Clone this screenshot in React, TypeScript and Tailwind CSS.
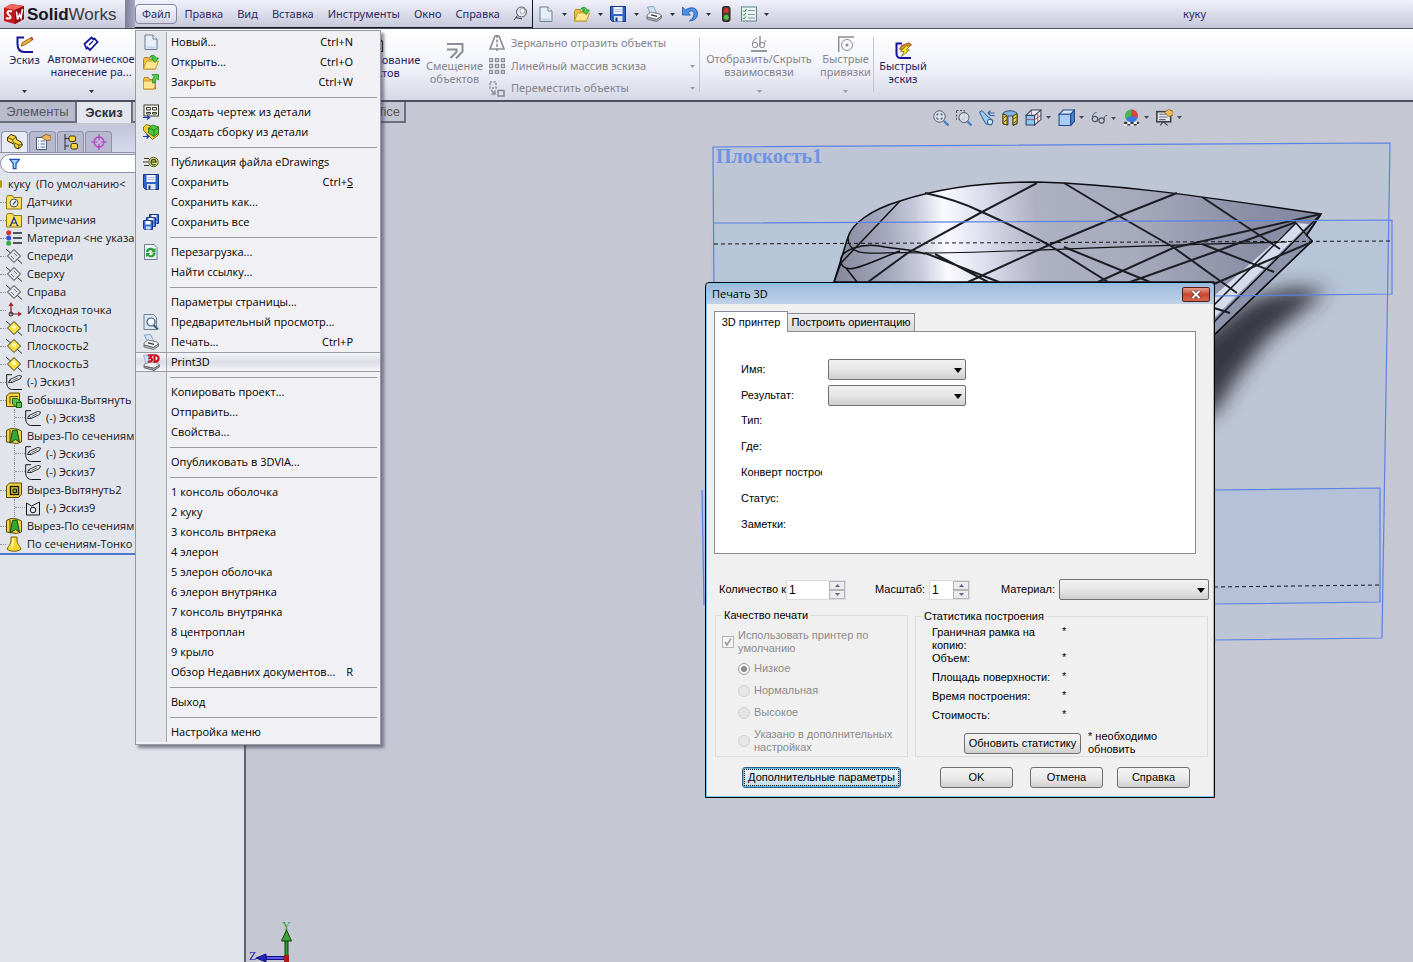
import { useState } from 'react'
import type { ReactNode } from 'react'

/* ---------- icons ---------- */

function Svg({ children, size = 16 }: { children: ReactNode; size?: number }) {
    return (
        <svg width={size} height={size} viewBox="0 0 16 16" fill="none" className="shrink-0" aria-hidden="true">
            {children}
        </svg>
    )
}

const DownArrow = ({ className = 'text-[#30303c]' }: { className?: string }) => (
    <svg width="5" height="3" viewBox="0 0 5 3" className={`shrink-0 ${className}`} aria-hidden="true">
        <path d="M0 0h5L2.500 3z" fill="currentColor" />
    </svg>
)

const NewIcon = () => (
    <Svg>
        <path d="M2 1h8l4 4v10.500H2z" fill="#e8eef6" stroke="#6b7c92" />
        <path d="M10 1v4h4" fill="#fff" stroke="#6b7c92" />
        <path d="M3.500 13.500h9" stroke="#c3d2e4" strokeWidth="2" />
    </Svg>
)

const OpenIcon = () => (
    <Svg>
        <path d="M.5 5.500l1-2h4l1 2h6V15H.5z" fill="#f0c244" stroke="#b0851f" />
        <path d="M.5 15l3-8h12L12.500 15z" fill="#ffe790" stroke="#c49a2c" />
        <path d="M6.500 3.500c1.500-3 5.500-3 6.500.5h2.500l-3.500 4.500L8.500 4h2C10 2.800 8 2.600 6.500 3.500z" fill="#4fd04a" stroke="#158015" strokeWidth=".7" />
    </Svg>
)

const CloseDocIcon = () => (
    <Svg>
        <path d="M.5 5.500l1-2h4l1 2h6V15H.5z" fill="#f0c244" stroke="#b0851f" />
        <path d="M.5 15V7h11.500v6L10 15z" fill="#ffe790" stroke="#c49a2c" />
        <path d="M9 .5h6.500v5.500l-2-1.500c-1 1-1.500 2.500-1.500 4.500H9.500c0-3 .5-5 1.500-6.500z" fill="#4fd04a" stroke="#158015" strokeWidth=".7" />
    </Svg>
)

const SaveIcon = () => (
    <Svg>
        <path d="M.5.5h15v15h-13l-2-2z" fill="#2f63c8" stroke="#16357e" />
        <path d="M3.500 1h9v7h-9z" fill="#f2f6fd" />
        <path d="M4.500 3.500h7M4.500 5.500h7" stroke="#a9bcdf" />
        <path d="M4 10h8.500v5.500H4z" fill="#dfe5f0" />
        <path d="M5.500 11.500h2v4h-2z" fill="#16357e" />
    </Svg>
)

const SaveAllIcon = () => (
    <Svg>
        {[[6, 0], [3, 3], [0, 6]].map(([x, y]) => (
            <g key={x} transform={`translate(${x} ${y})`}>
                <path d="M.5.5h9v9h-8l-1-1z" fill="#3a6fd4" stroke="#17388a" />
                <path d="M2.500 1h5v3.500h-5z" fill="#fff" />
                <path d="M3 6.500h4.500v3H3z" fill="#cfe0f8" />
            </g>
        ))}
    </Svg>
)

const PrintIcon = () => (
    <Svg>
        <path d="M1.500 1l6-.5 3 6-6 2z" fill="#cfe4fa" stroke="#7391b5" strokeWidth=".8" />
        <path d="M1 9l4-3 9 2 1.500 2-5 3.500L1 11z" fill="#f2f2f2" stroke="#63636a" strokeWidth=".8" />
        <path d="M1 11v2l9.500 2.500 5-3.500v-2l-5 3.500z" fill="#bfbfc5" stroke="#55555c" strokeWidth=".8" />
        <path d="M5 8.800l6 1.500" stroke="#35353c" strokeWidth="1.200" />
    </Svg>
)

const Print3DIcon = () => (
    <Svg size={17}>
        <path d="M1 10l4-3 9 1.500 1.500 2-5 3L1 11.500z" fill="#eeeef0" stroke="#63636a" strokeWidth=".8" />
        <path d="M1 11.500v1.500l9.500 2.500 5-3.500v-1.500l-5 3z" fill="#a9a9b0" stroke="#55555c" strokeWidth=".8" />
        <path d="M.5 1h4l2 7-3.500 1z" fill="#cfe4fa" stroke="#7391b5" strokeWidth=".6" />
        <path d="M4.500 1.200h4L6.500 3.700c3.200 0 2.500 4.300-2 3.300M10.800 1.200v6h.7c4.200 0 4.200-6 0-6z" stroke="#cc1420" strokeWidth="2" />
    </Svg>
)

const UndoIcon = () => (
    <Svg>
        <path d="M.5 1v8h8L6 6.800C8 4.500 12 4 12 8c0 3-2 5-4.500 7C13 14.500 16 11.500 15.500 7 15 1 8 .5 3.500 4z" fill="#4a93e6" stroke="#1c4fa3" strokeWidth=".8" />
    </Svg>
)

const LightIcon = () => (
    <Svg>
        <rect x="4.500" y=".5" width="7.500" height="15" rx="2" fill="#4a3c36" stroke="#2a201c" />
        <circle cx="8.250" cy="4.500" r="2.500" fill="#e0302a" />
        <circle cx="8.250" cy="11.200" r="2.500" fill="#46c846" />
    </Svg>
)

const OptionsIcon = () => (
    <Svg>
        <rect x=".5" y="1" width="15" height="14" fill="#eaf3f4" stroke="#5f8589" />
        <path d="M7 4.500h7M7 8.500h7M7 12h7" stroke="#7f9ca0" />
        <path d="M2 4.500l1.500 1.500 2-3M2 8.500l1 1L5 7M2 12l1 1 2-2.500" stroke="#2c8a3c" />
    </Svg>
)

const PinIcon = () => (
    <Svg>
        <circle cx="9.500" cy="6" r="5" fill="#e8e8f0" stroke="#55555f" />
        <circle cx="10.500" cy="5" r="2.500" fill="#fff" stroke="#7c7c88" strokeWidth=".7" />
        <path d="M5.500 9.500L2 14M4 11.500l6 1.500" stroke="#3c3c46" />
    </Svg>
)

const DrawingIcon = () => (
    <Svg>
        <rect x="1" y="1" width="14.500" height="11" fill="#f6f6ec" stroke="#3a3a32" />
        <path d="M3.500 3.500h4v2.500h-4zM9.500 3.500h4v2.500h-4zM3.500 8.500h4v1.500h-4zM9.500 8.500h4v1.500h-4z" stroke="#3a3a32" />
        <path d="M0 13.500h6M4 11.500l2.500 2L4 15.500" stroke="#1b3fb0" strokeWidth="1.200" />
    </Svg>
)

const AssemblyIcon = () => (
    <Svg>
        <path d="M.5 3l3-2.500 12 4V11l-6 4.500-9-9z" fill="#f4cf33" stroke="#6b5510" strokeWidth=".8" />
        <path d="M5.500 4l4-3 6 2v6L11 12.500 5.500 9z" fill="#4fc63e" stroke="#1e6b14" strokeWidth=".8" />
        <path d="M5.500 4l5.500 2.200L15.500 3M11 6.200v6.300" stroke="#1e6b14" strokeWidth=".8" />
        <path d="M0 12.500h5M3.500 10.500l2.500 2-2.500 2" stroke="#1b3fb0" strokeWidth="1.200" />
    </Svg>
)

const EDrawingsIcon = () => (
    <Svg>
        <circle cx="10.500" cy="8" r="4.700" fill="#dbe08a" stroke="#5b6020" />
        <path d="M8 8.200h5c0-3.600-4.700-3.600-5 0 0 3 3 3.300 4.800 2" stroke="#4a4f18" strokeWidth="1.300" />
        <path d="M1 4.500h5M0 8h5M1 11.500h5" stroke="#33331e" />
    </Svg>
)

const ReloadIcon = () => (
    <Svg>
        <path d="M1.500.5H11l3 3v12H1.500z" fill="#eef4fa" stroke="#6b7c92" />
        <path d="M3 8c0-4.500 5.500-5.500 8-3l1.500-1v4.500H8L9.500 7C8.500 5.500 5.500 6 5.500 8z" fill="#26a33a" />
        <path d="M12.500 9c0 4.500-5.500 5.500-8 3L3 13V9h4.500L6 10.500c1 1.500 4 1 4-1.500z" fill="#26a33a" />
    </Svg>
)

const PreviewIcon = () => (
    <Svg>
        <path d="M1 .5h9.500l3 3v12H1z" fill="#dbe7f5" stroke="#6b7c92" />
        <circle cx="8" cy="8" r="4" fill="#f4f9ff" stroke="#42597a" strokeWidth="1.200" />
        <path d="M10.500 11l4.500 4.500" stroke="#42597a" strokeWidth="2" />
    </Svg>
)

const PencilEllipse = () => (
    <Svg>
        <path d="M6 .7H.7V8c0 5 2 7.500 6 7.500H16" stroke="#15151a" />
        <path d="M2.500 8.500L4 5.500 12.500 1.500 15.500 2 14.500 4.500 6 8.500z" fill="#fff" stroke="#15151a" strokeWidth=".9" />
        <path d="M4 5.500l2 3M6.500 6.500l6-3" stroke="#15151a" strokeWidth=".7" />
    </Svg>
)

const FolderIcon = ({ kind }: { kind: 'sensor' | 'note' }) => (
    <Svg>
        <path d="M.5 3.500l1-2h5l1 2h8v11.500H.5z" fill="#ffe05c" stroke="#8d7415" />
        {kind === 'sensor' ? (
            <>
                <circle cx="8" cy="9" r="4" fill="#eef3fa" stroke="#42526e" />
                <path d="M7 10.500L10 7" stroke="#42526e" strokeWidth="1.200" />
            </>
        ) : (
            <path d="M4.500 13.500L8 5.500l3.500 8M6 11h4M3.500 13.500h2M10.500 13.500h2" stroke="#1a2f9c" strokeWidth="1.200" />
        )}
    </Svg>
)

const MaterialIcon = () => (
    <Svg>
        <path d="M7 3h9M7 8h9M7 13h9" stroke="#22222a" strokeWidth="1.400" />
        <circle cx="2.700" cy="2.700" r="2.500" fill="#e0322c" />
        <circle cx="2.700" cy="8" r="2.500" fill="#2f4fe0" />
        <circle cx="2.700" cy="13.300" r="2.500" fill="#2fae3c" />
    </Svg>
)

const PlaneIcon = ({ filled }: { filled?: boolean }) => (
    <Svg>
        <path d="M8 1.500L14.500 8 8 14.500 1.500 8z" fill={filled ? '#ffe03a' : 'none'} stroke="#33332c" />
        {filled ? (
            <path d="M6.500 5.500L9.500 8.500" stroke="#fffbd0" strokeWidth="3" />
        ) : (
            <path d="M5 8l3 3M8 5l3 3" stroke="#4b4b44" strokeWidth=".7" />
        )}
        <path d="M0 1l4.500 4M11.500 11.500L16 15.500" stroke="#33332c" />
    </Svg>
)

const OriginIcon = () => (
    <Svg>
        <path d="M5 3v9h8" stroke="#8c1c1c" strokeWidth="1.200" />
        <path d="M5 0L7.500 4h-5zM16 12l-4 2.500v-5z" fill="#b32020" />
        <circle cx="5" cy="12" r="2" stroke="#22222a" />
    </Svg>
)

const BossIcon = () => (
    <Svg>
        <path d="M.5 4l3-3h10v10l-3 3.500H.5z" fill="#f5d53d" stroke="#59480c" />
        <path d="M4 4.500h8M4 4.500v7" stroke="#59480c" />
        <path d="M6.500 6.500H11l4.500 4v5h-5l-4-3.500z" fill="#55c24a" stroke="#1b5e16" />
        <path d="M10.500 15.500v-5h5" stroke="#1b5e16" />
    </Svg>
)

const LoftCutIcon = () => (
    <Svg>
        <path d="M.5 2.500L5 .5l6 .5 4.500 2V14l-5 1.500L.5 14z" fill="#f5d53d" stroke="#59480c" />
        <path d="M4 15L6.500 2.500 11 2l2.500 12-4-2.500z" fill="#35a63a" stroke="#12480f" />
        <path d="M4 2v12" stroke="#59480c" />
    </Svg>
)

const ExtrudeCutIcon = () => (
    <Svg>
        <path d="M.5 4l3-3h12v11l-3 3.500H.5z" fill="#f5d53d" stroke="#59480c" />
        <rect x="4.500" y="4.500" width="8" height="8" fill="#e9c52c" stroke="#201c08" strokeWidth="1.400" />
        <path d="M7 7h3.500v3.500H7z" fill="#55c24a" stroke="#201c08" />
    </Svg>
)

const SketchClosedIcon = () => (
    <Svg>
        <path d="M1.500 3l5 3 8-4v13h-13z" stroke="#15151a" />
        <circle cx="8" cy="10" r="2.800" stroke="#15151a" />
    </Svg>
)

const LoftIcon = () => (
    <Svg>
        <path d="M5 1h6v3c0 4 2 5 4 9-3 3-11 3-14 0 2-4 4-5 4-9z" fill="#f7d634" stroke="#77600f" />
        <path d="M7 2v4c0 3-1 4-2 6" stroke="#fff6bc" strokeWidth="1.500" />
    </Svg>
)

const PartIcon = () => (
    <Svg>
        <path d="M.5 3.500L4 .5l5 2 .5 3L14 8l1.500 3-4 4L8 13.500l-.5-3-7-3.500z" fill="#f5d53d" stroke="#3c3108" />
        <path d="M.5 3.500l5 2 .7 3L12 11l-.5 4M6 5.500L9 3M12 11l3.500-.5" stroke="#3c3108" strokeWidth=".8" />
    </Svg>
)

const PropertiesIcon = () => (
    <Svg>
        <path d="M1.500 3.500h10v12h-10z" fill="#fff" stroke="#3f5573" />
        <path d="M3 7h1M3 10h1M3 13h1M5.500 7h4.500M5.500 10h4.500M5.500 13h4.500" stroke="#3f66b0" />
        <path d="M6 3l5-2.500L16 2v4l-5 .5z" fill="#e9b65b" stroke="#7c5615" strokeWidth=".8" />
    </Svg>
)

const ConfigIcon = () => (
    <Svg>
        <path d="M2 0v16M2 4.500h4M2 12h4" stroke="#2b2b35" />
        <rect x="6" y="2" width="6.500" height="5.500" rx="1.500" fill="#f5d53d" stroke="#3c3108" />
        <rect x="8" y="9.500" width="6.500" height="5.500" rx="1.500" fill="#f5d53d" stroke="#3c3108" />
    </Svg>
)

const DimXIcon = () => (
    <Svg>
        <circle cx="8" cy="8" r="5" stroke="#b63fce" strokeWidth="1.300" />
        <path d="M8 0v16M0 8h16" stroke="#b63fce" strokeWidth="1.200" />
        <circle cx="8" cy="8" r="1.800" fill="#e9a8f4" />
    </Svg>
)

const FilterIcon = () => (
    <svg width="12" height="12" viewBox="0 0 12 12" aria-hidden="true">
        <path d="M.8 1h10.400L7.500 5.500V11h-3V5.500z" fill="#a9d2ff" stroke="#1b4fb8" strokeWidth="1.300" />
    </svg>
)

const SketchIcon = () => (
    <svg width="18" height="17" viewBox="0 0 18 17" fill="none" aria-hidden="true">
        <path d="M8 1.500H1.500V8c0 6 3 8 7 8H17" stroke="#14149c" strokeWidth="2" />
        <path d="M5 10l1.500-3.500 8-4.500 2 2-8 5z" fill="#f7b733" stroke="#7b3e0c" strokeWidth=".8" />
        <path d="M14 1.500l2.500 3 1-1.500L16 1z" fill="#c23a2c" />
    </svg>
)

const DimensionIcon = () => (
    <svg width="16" height="16" viewBox="0 0 16 16" fill="none" aria-hidden="true">
        <path d="M1.500 8L8.500 1.500l2 2 1-1 3 3.500L7 14 4.500 11.500l-1 1z" fill="#fff" stroke="#14149c" strokeWidth="1.800" />
        <path d="M6 9l4-4" stroke="#14149c" strokeWidth="1.200" />
    </svg>
)

const ConvertIcon = () => (
    <svg width="18" height="17" viewBox="0 0 18 17" fill="none" aria-hidden="true">
        <path d="M5.500 1.500h7l4 4v10h-11z" fill="#fff" stroke="#15151a" strokeWidth="1.200" />
        <path d="M12.500 1.500v4h4" stroke="#15151a" />
    </svg>
)

const OffsetIcon = () => (
    <svg width="18" height="17" viewBox="0 0 18 17" fill="none" stroke="#8d8d95" strokeWidth="2" aria-hidden="true">
        <path d="M1 2h15.500v7.500L10 16.500M1 7.500h9.500V10l-6 6" />
    </svg>
)

const MirrorIcon = () => (
    <Svg>
        <path d="M6 1L1 14h14L10 1z" stroke="#8d8d95" strokeWidth="1.600" />
        <path d="M8 0v16" stroke="#8d8d95" strokeWidth="1.600" strokeDasharray="3 1.500" />
    </Svg>
)

const PatternIcon = () => (
    <Svg>
        {[0, 6, 12].map((y) =>
            [0, 6, 12].map((x) => (
                <rect key={`${x}-${y}`} x={x + 0.5} y={y + 0.5} width="3" height="3" stroke="#8d8d95" strokeWidth="1.400" />
            )),
        )}
    </Svg>
)

const MoveIcon = () => (
    <Svg>
        <rect x="1" y="1" width="6" height="6" stroke="#8d8d95" strokeWidth="1.500" strokeDasharray="2 1.500" />
        <rect x="9" y="9.500" width="6" height="5.500" stroke="#8d8d95" strokeWidth="1.600" />
        <path d="M2 9l4 4M6 9.500V13H2.500" stroke="#8d8d95" strokeWidth="1.500" />
    </Svg>
)

const RelationsIcon = () => (
    <Svg>
        <path d="M0 15h16" stroke="#8d8d95" strokeWidth="1.800" />
        <path d="M9 0v10" stroke="#8d8d95" strokeWidth="1.400" />
        <circle cx="4" cy="9" r="2.700" stroke="#8d8d95" />
        <circle cx="11" cy="9" r="2.700" stroke="#8d8d95" />
        <path d="M1.500 8c0-3 2-5 4.500-6M13.500 8c0-3 1-4 2-3" stroke="#8d8d95" />
    </Svg>
)

const SnapsIcon = () => (
    <Svg>
        <path d="M.7 16V1H16" stroke="#8d8d95" strokeWidth="1.500" />
        <circle cx="9" cy="9" r="5.500" stroke="#8d8d95" />
        <circle cx="9" cy="9" r="1.500" fill="#8d8d95" />
    </Svg>
)

const RapidSketchIcon = () => (
    <svg width="17" height="17" viewBox="0 0 17 17" fill="none" aria-hidden="true">
        <path d="M7 1.500H1.500V12c0 2.500 2 4 4 4H16" stroke="#14149c" strokeWidth="2" />
        <path d="M4.500 7l2-3.500L14 .8l2.500 2L8 8z" fill="#e9893a" stroke="#7b3e0c" strokeWidth=".8" />
        <path d="M11 4L5.500 9.500H9l-2.500 5 8-6.500H11L15 4z" fill="#ffe92e" stroke="#6b5a00" strokeWidth=".7" />
    </svg>
)

/* heads-up view toolbar */

const ZoomFitIcon = () => (
    <Svg>
        <circle cx="6.500" cy="6.500" r="5.700" fill="#d9e2ee" stroke="#565c6a" />
        <path d="M4 5.500V4h1.500M7.500 4H9v1.500M9 7.500V9H7.500M5.500 9H4V7.500" stroke="#33384a" />
        <path d="M11 11l4.500 4.500" stroke="#4a7fc4" strokeWidth="2.400" />
    </Svg>
)

const ZoomAreaIcon = () => (
    <Svg>
        <path d="M.5.5h8v9h-8z" stroke="#4c5262" strokeDasharray="2 1.500" />
        <circle cx="8" cy="7.500" r="5" fill="#d9e2ee" fillOpacity=".8" stroke="#565c6a" />
        <path d="M11.500 11.500l4 4" stroke="#4a7fc4" strokeWidth="2.400" />
    </Svg>
)

const PrevViewIcon = () => (
    <Svg>
        <path d="M.5 2l2.500-1.500L8 6l6 4.500-1.500 4.500-5.500-1L4 9z" fill="#9cc9ee" stroke="#2c5c94" />
        <circle cx="11" cy="12" r="2.700" fill="#cfe7fb" stroke="#2c5c94" />
        <path d="M15.500 3H9M11.500.5L9 3l2.500 2.500M15.500 5.500h-4" stroke="#3c64ad" strokeWidth="1.100" />
    </Svg>
)

const SectionIcon = () => (
    <Svg>
        <path d="M1 3c4-3 10-3 14 0v11l-4 1.500V6H6v9L1 14z" fill="#7fb4e8" stroke="#2c5280" />
        <path d="M1 4l4 1.500V15l-4-1.500zM11 5.500L15 4v9.500L11 15z" fill="#f5d53d" stroke="#4b3f0c" />
        <path d="M1.500 8l3-2M1.500 12l3-2M11.500 9l3-2M11.500 13l3-2" stroke="#4b3f0c" />
    </Svg>
)

const OrientIcon = () => (
    <Svg size={17}>
        <path d="M1 6h8v9H1z" fill="#8cc6f2" stroke="#29466b" />
        <path d="M1 6l5-5h9L9 6zM15 1v9l-6 5V6" fill="#e9eef7" stroke="#3a4459" />
        <path d="M6 1v5M1 10h8M12 4v8M9 10l6-4" stroke="#a03c4c" strokeWidth=".8" />
    </Svg>
)

const DisplayIcon = () => (
    <Svg size={17}>
        <path d="M1 5l4-4h10.500L12 5z" fill="#d5e8fb" stroke="#28498c" />
        <path d="M1 5h11v10.500H1z" fill="#a5cdf5" stroke="#28498c" />
        <path d="M12 5l3.500-4v10.500L12 15.500z" fill="#4b82cf" stroke="#28498c" />
    </Svg>
)

const HideShowIcon = () => (
    <Svg>
        <circle cx="4" cy="9" r="2.700" stroke="#4f5665" strokeWidth="1.200" />
        <circle cx="10.500" cy="10.500" r="2.700" stroke="#4f5665" strokeWidth="1.200" />
        <path d="M1.300 8.500C1.500 5 3 2.500 5.500 2.500M6.700 9.500h1.300M13 10c0-3 1-4.500 3-4.500" stroke="#4f5665" />
    </Svg>
)

const AppearanceIcon = () => (
    <Svg size={17}>
        <path d="M1 12h14v3.500H1z" fill="#fff" />
        <path d="M1 12h3v2H1zM7 12h3v2H7zM13 12h2v2h-2zM4 14h3v1.500H4zM10 14h3v1.500h-3z" fill="#33333c" />
        <circle cx="8" cy="6.500" r="6" fill="#3f78dc" />
        <path d="M8 .5a6 6 0 0 0-5.500 8.500L8 6.500z" fill="#48b84b" />
        <path d="M8 .5a6 6 0 0 1 5.800 7.500L8 6.500z" fill="#dd4438" />
    </Svg>
)

const SceneIcon = () => (
    <Svg size={17}>
        <rect x=".8" y="2.500" width="13" height="9.500" fill="#e8e8ea" stroke="#3b3f4a" strokeWidth="1.500" />
        <path d="M3 5h8M3 7.500h8M3 10h6" stroke="#62677a" />
        <path d="M4 15.500L7 12l4 3.500" stroke="#3b3f4a" />
        <path d="M8 3l4-2.500L16 2v4l-4 1z" fill="#f0bd5c" stroke="#7c5615" strokeWidth=".7" />
    </Svg>
)

const LogoCube = () => (
    <svg width="22" height="22" viewBox="0 0 22 22" aria-hidden="true">
        <path d="M1 5L8 1l13 2v13l-9 5-11-3z" fill="#c3171c" />
        <path d="M1 5L8 1l13 2-9 4z" fill="#f0655c" />
        <path d="M12 7l9-4v13l-9 5z" fill="#8d0a10" />
        <path d="M9 8.500c-4-1.500-6 1-3 3.500 3 2 1.500 4.500-3 3" fill="none" stroke="#fff" strokeWidth="2" />
        <path d="M13.500 8.500l1 8 2-5 1.500 3.500 1.500-9" fill="none" stroke="#fff" strokeWidth="1.600" />
    </svg>
)

/* ---------- data ---------- */

const menuBar = ['Файл', 'Правка', 'Вид', 'Вставка', 'Инструменты', 'Окно', 'Справка']

type MenuEntry = { label: string; icon?: ReactNode; keys?: ReactNode; active?: boolean }

const fileMenu: MenuEntry[][] = [
    [
        { label: 'Новый...', icon: <NewIcon />, keys: 'Ctrl+N' },
        { label: 'Открыть...', icon: <OpenIcon />, keys: 'Ctrl+O' },
        { label: 'Закрыть', icon: <CloseDocIcon />, keys: 'Ctrl+W' },
    ],
    [
        { label: 'Создать чертеж из детали', icon: <DrawingIcon /> },
        { label: 'Создать сборку из детали', icon: <AssemblyIcon /> },
    ],
    [
        { label: 'Публикация файла eDrawings', icon: <EDrawingsIcon /> },
        { label: 'Сохранить', icon: <SaveIcon />, keys: <>Ctrl+<u>S</u></> },
        { label: 'Сохранить как...' },
        { label: 'Сохранить все', icon: <SaveAllIcon /> },
    ],
    [{ label: 'Перезагрузка...', icon: <ReloadIcon /> }, { label: 'Найти ссылку...' }],
    [
        { label: 'Параметры страницы...' },
        { label: 'Предварительный просмотр...', icon: <PreviewIcon /> },
        { label: 'Печать...', icon: <PrintIcon />, keys: 'Ctrl+P' },
        { label: 'Print3D', icon: <Print3DIcon />, active: true },
    ],
    [{ label: 'Копировать проект...' }, { label: 'Отправить...' }, { label: 'Свойства...' }],
    [{ label: 'Опубликовать в 3DVIA...' }],
    [
        { label: '1 консоль оболочка' },
        { label: '2 куку' },
        { label: '3 консоль внтряека' },
        { label: '4 элерон' },
        { label: '5 элерон оболочка' },
        { label: '6 элерон внутрянка' },
        { label: '7 консоль внутрянка' },
        { label: '8 центроплан' },
        { label: '9 крыло' },
        { label: 'Обзор Недавних документов...', keys: 'R' },
    ],
    [{ label: 'Выход' }],
    [{ label: 'Настройка меню' }],
]

const quickTools = [
    { name: 'Новый', icon: <NewIcon /> },
    { name: 'Открыть', icon: <OpenIcon /> },
    { name: 'Сохранить', icon: <SaveIcon /> },
    { name: 'Печать', icon: <PrintIcon /> },
    { name: 'Отменить', icon: <UndoIcon /> },
]

const viewTools = [
    { name: 'Изменить в размер экрана', icon: <ZoomFitIcon /> },
    { name: 'Увеличить область', icon: <ZoomAreaIcon /> },
    { name: 'Предыдущий вид', icon: <PrevViewIcon /> },
    { name: 'Разрез', icon: <SectionIcon /> },
    { name: 'Ориентация видов', icon: <OrientIcon />, drop: true },
    { name: 'Стиль отображения', icon: <DisplayIcon />, drop: true },
    { name: 'Скрыть или показать', icon: <HideShowIcon />, drop: true },
    { name: 'Внешний вид', icon: <AppearanceIcon />, drop: true },
    { name: 'Сцена', icon: <SceneIcon />, drop: true },
]

const tree: { label: string; icon: ReactNode; child?: boolean }[] = [
    { label: 'Датчики', icon: <FolderIcon kind="sensor" /> },
    { label: 'Примечания', icon: <FolderIcon kind="note" /> },
    { label: 'Материал <не указа', icon: <MaterialIcon /> },
    { label: 'Спереди', icon: <PlaneIcon /> },
    { label: 'Сверху', icon: <PlaneIcon /> },
    { label: 'Справа', icon: <PlaneIcon /> },
    { label: 'Исходная точка', icon: <OriginIcon /> },
    { label: 'Плоскость1', icon: <PlaneIcon filled /> },
    { label: 'Плоскость2', icon: <PlaneIcon filled /> },
    { label: 'Плоскость3', icon: <PlaneIcon filled /> },
    { label: '(-) Эскиз1', icon: <PencilEllipse /> },
    { label: 'Бобышка-Вытянуть', icon: <BossIcon /> },
    { label: '(-) Эскиз8', icon: <PencilEllipse />, child: true },
    { label: 'Вырез-По сечениям', icon: <LoftCutIcon /> },
    { label: '(-) Эскиз6', icon: <PencilEllipse />, child: true },
    { label: '(-) Эскиз7', icon: <PencilEllipse />, child: true },
    { label: 'Вырез-Вытянуть2', icon: <ExtrudeCutIcon /> },
    { label: '(-) Эскиз9', icon: <SketchClosedIcon />, child: true },
    { label: 'Вырез-По сечениям', icon: <LoftCutIcon /> },
    { label: 'По сечениям-Тонко', icon: <LoftIcon /> },
]

const panelTabs = [
    { name: 'Дерево конструирования', icon: <PartIcon /> },
    { name: 'Менеджер свойств', icon: <PropertiesIcon /> },
    { name: 'Менеджер конфигураций', icon: <ConfigIcon /> },
    { name: 'Менеджер размеров', icon: <DimXIcon /> },
]

/* ---------- top bars ---------- */

function FileMenu() {
    return (
        <div
            role="menu"
            className="absolute top-[30px] left-[135px] z-30 w-[246px] border border-[#979aa2] bg-[#f1f1f5] pt-px pb-[2px] font-['Open_Sans',sans-serif] text-[11px] text-black shadow-[3px_3px_3px_rgba(60,60,80,0.6)]"
        >
            {fileMenu.map((group, i) => (
                <div key={i}>
                    {i > 0 && (
                        <div className="flex h-[10px] items-center">
                            <div className="h-full w-[31px] border-r border-[#a5a8ae] bg-[#e3e6ea]" />
                            <hr className="mr-[3px] ml-[3px] flex-1 border-[#9b9ba3]" />
                        </div>
                    )}
                    {group.map((item) => (
                        <button
                            key={item.label}
                            role="menuitem"
                            className={`flex h-5 w-full items-center text-left ${
                                item.active
                                    ? 'border-y border-[#9a9da6] bg-linear-to-b from-[#f4f4f8] via-[#dcdde6] to-[#f4f4f8]'
                                    : ''
                            }`}
                        >
                            <span
                                className={`flex h-full w-[31px] shrink-0 items-center justify-center border-r border-[#a5a8ae] ${
                                    item.active ? '' : 'bg-[#e3e6ea]'
                                }`}
                            >
                                {item.icon}
                            </span>
                            <span className="ml-1 flex-1 whitespace-nowrap">{item.label}</span>
                            <span className="mr-[27px]">{item.keys}</span>
                        </button>
                    ))}
                </div>
            ))}
        </div>
    )
}

function TitleBar() {
    return (
        <header className="relative z-20 flex h-7 shrink-0 items-stretch bg-linear-to-b from-[#f0f1fa] to-[#c6c8da] text-[#2b2b66]">
            <div className="flex w-[125px] items-center gap-[2px] pl-[3px]">
                <LogoCube />
                <span className="font-['Liberation_Sans',sans-serif] text-[17px] leading-none text-[#3a3a42]">
                    <b className="text-[#16161c]">Solid</b>Works
                </span>
            </div>
            <div className="w-[10px] bg-linear-to-r from-[#7c7e98] to-[#a9abc4]" />
            <nav className="flex items-center border-r border-b border-[#16161c]">
                {menuBar.map((name, i) => (
                    <button
                        key={name}
                        className={`h-5 rounded-[4px] border px-[6px] leading-none ${
                            i === 0 ? 'border-[#85879c] bg-linear-to-b from-[#f6f6fc] to-[#d4d6e6]' : 'border-transparent'
                        }`}
                    >
                        {name}
                    </button>
                ))}
                <button aria-label="Закрепить" className="mr-[4px] ml-[5px]">
                    <PinIcon />
                </button>
            </nav>
            <div className="flex items-center pl-[5px]">
                {quickTools.map((tool) => (
                    <button key={tool.name} aria-label={tool.name} className="flex w-9 items-center gap-2">
                        {tool.icon}
                        <DownArrow />
                    </button>
                ))}
                <button aria-label="Перестроить" className="w-[23px]">
                    <LightIcon />
                </button>
                <button aria-label="Параметры" className="flex items-center gap-[7px]">
                    <OptionsIcon />
                    <DownArrow />
                </button>
            </div>
            <h1 className="mr-[207px] ml-auto self-center">куку</h1>
            <FileMenu />
        </header>
    )
}

type BigButtonProps = { icon: ReactNode; lines: string[]; width: string; on?: boolean; drop?: boolean; low?: boolean }

function BigButton({ icon, lines, width, on, drop, low }: BigButtonProps) {
    return (
        <button
            className={`flex h-full flex-col items-center leading-[13px] whitespace-nowrap ${width} ${
                low ? 'pt-[13px]' : 'pt-[7px]'
            } ${on ? 'text-[#23235f]' : 'text-[#85858d]'}`}
        >
            {icon}
            {lines.map((line) => (
                <span key={line}>{line}</span>
            ))}
            {drop && (
                <span className="mt-auto pb-[7px]">
                    <DownArrow className={on ? 'text-[#30303c]' : 'text-[#9a9aa4]'} />
                </span>
            )}
        </button>
    )
}

function Ribbon() {
    const small = [
        { name: 'Зеркально отразить объекты', icon: <MirrorIcon /> },
        { name: 'Линейный массив эскиза', icon: <PatternIcon />, drop: true },
        { name: 'Переместить объекты', icon: <MoveIcon />, drop: true },
    ]
    return (
        <div className="flex h-[74px] shrink-0 items-stretch border-t border-b-2 border-[#4d4d5e] bg-linear-to-b from-white via-[#f3f4fa] to-[#d6d8e6]">
            <BigButton icon={<SketchIcon />} lines={['Эскиз']} width="w-[49px]" on drop />
            <BigButton icon={<DimensionIcon />} lines={['Автоматическое', 'нанесение ра...']} width="w-[84px]" on drop />
            <div className="w-[197px]" />
            <BigButton icon={<ConvertIcon />} lines={['Преобразование', 'объектов']} width="w-[90px]" on />
            <BigButton icon={<OffsetIcon />} lines={['Смещение', 'объектов']} width="w-[69px]" low />
            <div className="flex w-[210px] flex-col pt-[3px] text-[#85858d]">
                {small.map((item) => (
                    <button key={item.name} className="flex h-[23px] items-center gap-[6px] pr-1">
                        {item.icon}
                        <span className="flex-1 text-left whitespace-nowrap">{item.name}</span>
                        {item.drop && <DownArrow className="text-[#9a9aa4]" />}
                    </button>
                ))}
            </div>
            <div className="my-2 w-px bg-[#c3c4d0]" />
            <BigButton icon={<RelationsIcon />} lines={['Отобразить/Скрыть', 'взаимосвязи']} width="w-[118px]" drop />
            <BigButton icon={<SnapsIcon />} lines={['Быстрые', 'привязки']} width="w-[55px]" drop />
            <div className="my-2 w-px bg-[#c3c4d0]" />
            <BigButton icon={<RapidSketchIcon />} lines={['Быстрый', 'эскиз']} width="w-[58px]" on low />
        </div>
    )
}

function TabStrip() {
    return (
        <div className="flex h-6 shrink-0">
            <div className="flex h-[21px] border-b-2 border-[#6b6d80] font-['Liberation_Sans',sans-serif] text-[13px] text-[#55555f]">
                <button className="w-[77px] border-r-2 border-[#6b6d80] bg-[#b9bbca]">Элементы</button>
                <button className="-mb-[2px] w-[54px] bg-[#e4e6ee] font-bold text-[#2f2f38]">Эскиз</button>
                <div className="w-[220px] border-l-2 border-[#6b6d80]" />
                <button className="w-[55px] border-r-2 border-[#6b6d80] bg-[#c3c5d3] pr-1 text-right">Office</button>
            </div>
            <div className="mr-[231px] ml-auto flex items-end gap-[7px]">
                {viewTools.map((tool) => (
                    <button key={tool.name} aria-label={tool.name} className="flex items-center gap-[4px] pt-2">
                        {tool.icon}
                        {tool.drop && <DownArrow className="text-[#4a4a56]" />}
                    </button>
                ))}
            </div>
        </div>
    )
}

/* ---------- feature tree ---------- */

function FeaturePanel() {
    return (
        <aside className="w-[246px] shrink-0 border-r-2 border-[#5f6673] bg-[#e1e4ea]">
            <div className="flex h-[27px] items-end gap-px border-b border-[#8d90a6] bg-linear-to-b from-[#c3c5dc] to-[#d6d8ec] pl-px">
                {panelTabs.map((tab, i) => (
                    <button
                        key={tab.name}
                        aria-label={tab.name}
                        className={`flex h-[21px] w-[27px] items-center justify-center rounded-t-[4px] border border-b-0 border-[#8d90a6] ${
                            i === 0 ? 'bg-[#e8eaf4]' : 'bg-[#b7b9cf]'
                        }`}
                    >
                        {tab.icon}
                    </button>
                ))}
            </div>
            <div className="mt-px flex h-[19px] items-center rounded-l-full border border-[#8d90a6] bg-white pl-2">
                <FilterIcon />
                <input aria-label="Фильтр" className="ml-1 h-4 w-full bg-transparent outline-none" />
            </div>
            <ul className="border-b-2 border-[#4a78c8] pt-[2px] font-['Open_Sans',sans-serif] text-[11px] whitespace-nowrap text-[#16161c]">
                <li className="flex h-[18px] items-center gap-[6px]">
                    <span className="h-2 w-[2px] rounded-r-full bg-[#b89412]" />
                    <span className="whitespace-pre">куку  (По умолчанию&lt;</span>
                </li>
                {tree.map((node, i) => (
                    <li key={i} className="flex h-[18px] items-center">
                        {node.child ? (
                            <span className="ml-[14px] flex h-full w-[11px] flex-col border-l border-dotted border-[#8f8f98]">
                                <span className="h-[9px] border-b border-dotted border-[#8f8f98]" />
                            </span>
                        ) : (
                            <span className="w-[6px] border-b border-dotted border-[#8f8f98]" />
                        )}
                        {node.icon}
                        <span className="ml-[5px]">{node.label}</span>
                    </li>
                ))}
            </ul>
        </aside>
    )
}

/* ---------- 3D scene ---------- */

function Scene() {
    return (
        <svg width="1167" height="836" viewBox="246 126 1167 836" fill="none" className="absolute top-0 left-0">
            <defs>
                <linearGradient id="skin" gradientUnits="userSpaceOnUse" x1="835" y1="260" x2="1320" y2="225">
                    <stop offset="0" stopColor="#85889c" />
                    <stop offset=".11" stopColor="#a6a9bd" />
                    <stop offset=".17" stopColor="#c6c8da" />
                    <stop offset=".23" stopColor="#fafaff" />
                    <stop offset=".31" stopColor="#dcdeed" />
                    <stop offset=".42" stopColor="#aeb0c3" />
                    <stop offset=".62" stopColor="#a7a9bc" />
                    <stop offset=".85" stopColor="#8c8fa6" />
                    <stop offset="1" stopColor="#8286a0" />
                </linearGradient>
                <filter id="soft" x="-50%" y="-50%" width="200%" height="200%">
                    <feGaussianBlur stdDeviation="10" />
                </filter>
            </defs>

            {/* reference planes */}
            <path d="M713 147L1390 143 1382 638 705 640z" fill="#bcc4d5" fillOpacity=".8" />
            <path d="M714 223L1392 220V294L714 297z" fill="#b5c4d8" fillOpacity=".8" />
            <path d="M702 490L1380 488V602L704 605z" fill="#b2bfd8" fillOpacity=".8" />

            {/* shadow cast behind the trailing edge */}
            <path
                d="M1190 345L1252 298 1292 288 1328 290 1300 312 1268 338 1238 376 1218 408 1190 430z"
                fill="#2f3039"
                fillOpacity=".95"
                filter="url(#soft)"
            />

            {/* solid body */}
            <path
                d="M834 282L848 237C852 224 870 210 900 201C940 188 990 182 1037 182C1110 184 1180 193 1321 214L1306 236 1312 241 1214 335V282z"
                fill="url(#skin)"
                stroke="#0c0c12"
                strokeWidth="1.500"
            />
            <path d="M1312 241L1214 335V312L1302 231z" fill="#8e93ac" />
            <path d="M1296 223L1309 224 1214 318V296z" fill="#d7dcec" />
            <g stroke="#101016" strokeWidth="1.500">
                <path d="M1321 214L1214 322M1296 223L1312 241 1214 335M1296 223L1214 305M1321 214L1306 236" />
                <path d="M848 237C848 262 880 250 920 253C1000 253 1080 247 1287 242" strokeWidth="1.200" />
                <path d="M900 201L841 263M841 263C838 250 862 242 885 247C905 250 914 250 925 254" />
                <path d="M841 263C846 277 870 262 900 251M846 268L857 282M841 263L834 282" />
            </g>
            <g stroke="#1c1e24" strokeWidth="2">
                <path d="M925 193Q958 200 982 212Q1020 229 1049 245L1108 282" />
                <path d="M1037 183L982 212 909 252 868 282" />
                <path d="M1064 183L1119 216 1173 247 1237 293" />
                <path d="M1177 193L1119 216 1049 245 968 282" />
                <path d="M1202 197L1280 249" />
                <path d="M1321 214L1173 248 1098 282" />
                <path d="M1296 222L1220 250 1130 282" />
                <path d="M925 253L999 282M935 254L988 282" />
                <path d="M1064 247L1150 282" />
                <path d="M1202 244L1274 272" />
                <path d="M1312 242L1262 263 1214 284M1214 308L1230 313" />
            </g>

            {/* plane outlines */}
            <g stroke="#5b82e4" strokeWidth="1.200">
                <path d="M714 300L713 147 1390 143 1382 638 1214 640" />
                <path d="M714 223L1392 220V294L1214 296" />
                <path d="M704 605L702 490M1214 490L1380 488V602L1214 604" />
            </g>
            <path d="M714 244L1391 241M1214 587L1380 585" stroke="#15151a" strokeDasharray="4 3" />
            <text x="716" y="163" fontFamily="'Liberation Serif', serif" fontSize="20" fontWeight="bold" fill="#6f93e2">
                Плоскость1
            </text>

            {/* axis triad */}
            <path d="M285 958V938h3v20z" fill="#2f9a2f" stroke="#0d420d" />
            <path d="M286.500 930l5 11h-10z" fill="#3aa53a" stroke="#0d420d" />
            <path d="M284 956.500H266v3h18z" fill="#5a5af0" stroke="#10107a" />
            <path d="M256 958l10-4v8z" fill="#2222b8" stroke="#10107a" />
            <path d="M284 955h5v7h-5z" fill="#a81c1c" />
            <g fontFamily="'Liberation Serif', serif" fontSize="12">
                <text x="282" y="930" fill="#2f9a2f">Y</text>
                <text x="249" y="960" fill="#2222a8">Z</text>
            </g>
        </svg>
    )
}

/* ---------- Print3D dialog ---------- */

function DropDown({ id, className }: { id: string; className: string }) {
    return (
        <div className={`relative ${className}`}>
            <select
                id={id}
                className="block h-[21px] w-full appearance-none rounded-[2px] border border-[#707070] bg-linear-to-b from-[#f2f2f2] via-[#e6e6e6] to-[#cfcfcf]"
            >
                <option></option>
            </select>
            <svg width="8" height="5" viewBox="0 0 8 5" className="pointer-events-none absolute top-[9px] right-1" aria-hidden="true">
                <path d="M0 0h8L4 5z" fill="#000" />
            </svg>
        </div>
    )
}

function Spinner({ id, className }: { id: string; className: string }) {
    const [value, setValue] = useState(1)
    return (
        <div className={`flex h-5 border border-[#d9dbe0] bg-white ${className}`}>
            <input
                id={id}
                value={value}
                onChange={(e) => setValue(Number(e.target.value) || 1)}
                className="w-0 flex-1 pl-[2px] text-[12px] outline-none"
            />
            <div className="flex w-[16px] flex-col">
                <button
                    aria-label="Больше"
                    onClick={() => setValue(value + 1)}
                    className="flex flex-1 items-center justify-center border border-[#b4b6bb] bg-[#ececec]"
                >
                    <svg width="5" height="3" aria-hidden="true"><path d="M0 3h5L2.500 0z" fill="#5b6b94" /></svg>
                </button>
                <button
                    aria-label="Меньше"
                    onClick={() => setValue(Math.max(1, value - 1))}
                    className="flex flex-1 items-center justify-center border border-[#b4b6bb] bg-[#ececec]"
                >
                    <DownArrow className="text-[#5b6b94]" />
                </button>
            </div>
        </div>
    )
}

function PushButton({ children, className, focused }: { children: ReactNode; className: string; focused?: boolean }) {
    return (
        <button
            className={`h-[21px] rounded-[3px] border text-center leading-none whitespace-nowrap ${className} ${
                focused
                    ? 'border-[#2c628b] bg-linear-to-b from-[#eef6fb] to-[#c4dcea] p-px ring-1 ring-[#5fb8e6] ring-inset'
                    : 'border-[#707070] bg-linear-to-b from-[#f3f3f3] via-[#ebebeb] to-[#cfcfcf]'
            }`}
        >
            {focused ? <span className="block border border-dotted border-black py-[2px]">{children}</span> : children}
        </button>
    )
}

function Print3DDialog() {
    const qualities = ['Низкое', 'Нормальная', 'Высокое', 'Указано в дополнительных настройках']
    const stats = ['Граничная рамка на копию:', 'Объем:', 'Площадь поверхности:', 'Время построения:', 'Стоимость:']
    return (
        <div
            role="dialog"
            aria-label="Печать 3D"
            className="absolute top-[156px] left-[459px] z-10 w-[510px] rounded-t-[4px] border border-black bg-[#f0f0f0] pb-[9px] font-['Liberation_Sans',sans-serif] text-[11px] text-black ring-1 ring-[#7cc6ec] ring-inset"
        >
            <div className="mx-px mt-px flex h-[20px] items-center justify-between rounded-t-[3px] bg-linear-to-b from-[#9dbbdc] to-[#bfd2e8] pr-[3px] pl-[5px]">
                <h2 className="font-['Open_Sans',sans-serif]">Печать 3D</h2>
                <button
                    aria-label="Закрыть"
                    className="flex h-[15px] w-[28px] items-center justify-center rounded-[2px] border border-[#5a1a14] bg-linear-to-b from-[#e79b8e] via-[#c8452f] to-[#d46a52]"
                >
                    <svg width="10" height="9" viewBox="0 0 10 9" aria-hidden="true">
                        <path d="M1.500 1l7 7M8.500 1l-7 7" stroke="#4b2a2a" strokeWidth="3.200" />
                        <path d="M1.500 1l7 7M8.500 1l-7 7" stroke="#fff" strokeWidth="2" />
                    </svg>
                </button>
            </div>

            <div className="mt-[7px] ml-2 flex items-end" role="tablist">
                <button role="tab" aria-selected="true" className="relative z-10 -mb-px h-[21px] w-[74px] border border-b-0 border-[#898c95] bg-white leading-none">
                    3D принтер
                </button>
                <button role="tab" className="h-[18px] w-[127px] border border-b-0 border-l-0 border-[#898c95] bg-linear-to-b from-[#f0f0f0] to-[#dadada] leading-none whitespace-nowrap">
                    Построить ориентацию
                </button>
            </div>
            <div className="mr-[18px] ml-2 h-[223px] border border-[#898c95] bg-white pt-6 pl-[26px]">
                <div className="flex h-[26px] items-center">
                    <label htmlFor="printer" className="w-[87px]">Имя:</label>
                    <DropDown id="printer" className="w-[138px]" />
                </div>
                <div className="flex h-[26px] items-center">
                    <label htmlFor="result" className="w-[87px]">Результат:</label>
                    <DropDown id="result" className="w-[138px]" />
                </div>
                {['Тип:', 'Где:', 'Конверт построения:', 'Статус:', 'Заметки:'].map((name) => (
                    <p key={name} className="h-[26px] w-[81px] overflow-hidden leading-[24px] whitespace-nowrap">{name}</p>
                ))}
            </div>

            <div className="mt-[25px] flex h-[21px] items-center pr-[5px] pl-[13px]">
                <label htmlFor="copies" className="w-[67px] overflow-hidden whitespace-nowrap">Количество копий:</label>
                <Spinner id="copies" className="w-[60px]" />
                <label htmlFor="scale" className="ml-[29px] w-[54px]">Масштаб:</label>
                <Spinner id="scale" className="w-[41px]" />
                <label htmlFor="material" className="ml-auto w-[58px]">Материал:</label>
                <DropDown id="material" className="w-[150px]" />
            </div>

            <div className="mt-[9px] flex items-start gap-[7px] pr-[6px] pl-[9px]">
                <fieldset className="h-[148px] w-[193px] border border-[#dcdcdc] pl-[6px] text-[#8b8b8b]">
                    <legend className="px-[2px] leading-[13px] text-black">Качество печати</legend>
                    <label className="mt-[7px] flex items-center gap-[4px] leading-[13px]">
                        <span className="relative">
                            <input type="checkbox" defaultChecked disabled className="block size-3 appearance-none border border-[#b4b4b4] bg-[#f6f6f6]" />
                            <svg width="12" height="12" viewBox="0 0 12 12" fill="none" className="absolute inset-0" aria-hidden="true">
                                <path d="M3 6l2 3 4-6.500" stroke="#9c9c9c" strokeWidth="1.600" />
                            </svg>
                        </span>
                        <span className="w-[150px]">Использовать принтер по умолчанию</span>
                    </label>
                    <div className="mt-[7px] flex flex-col gap-[9px] pl-4">
                        {qualities.map((name, i) => (
                            <label key={name} className="flex items-center gap-[4px] leading-[13px]">
                                <input
                                    type="radio"
                                    name="quality"
                                    defaultChecked={i === 0}
                                    disabled
                                    className={`block size-3 shrink-0 appearance-none rounded-full border ${
                                        i === 0 ? 'border-[#a0a0a0] bg-[radial-gradient(#8a8a8a_35%,#f4f4f4_50%)]' : 'border-[#cfcfcf] bg-[#e6e6e6]'
                                    }`}
                                />
                                <span>{name}</span>
                            </label>
                        ))}
                    </div>
                </fieldset>

                <fieldset className="mt-px h-[147px] flex-1 border border-[#dcdcdc] pl-4">
                    <legend className="-ml-[10px] px-[2px] leading-[13px]">Статистика построения</legend>
                    <dl className="mt-[3px]">
                        {stats.map((name, i) => (
                            <div key={name} className={`flex leading-[13px] ${i > 1 ? 'mt-[6px]' : ''}`}>
                                <dt className="w-[130px]">
                                    <span className={i === 0 ? 'block w-[112px]' : 'whitespace-nowrap'}>{name}</span>
                                </dt>
                                <dd className="-mt-px">*</dd>
                            </div>
                        ))}
                    </dl>
                    <div className="mt-2 ml-[32px] flex items-center gap-[7px]">
                        <PushButton className="w-[117px]">Обновить статистику</PushButton>
                        <p className="w-[80px] leading-[13px]">* необходимо обновить</p>
                    </div>
                </fieldset>
            </div>

            <div className="mt-[10px] flex pl-9">
                <PushButton className="w-[159px]" focused>Дополнительные параметры</PushButton>
                <PushButton className="ml-[39px] w-[73px]">OK</PushButton>
                <PushButton className="ml-[17px] w-[73px]">Отмена</PushButton>
                <PushButton className="ml-[14px] w-[73px]">Справка</PushButton>
            </div>
        </div>
    )
}

export default function App() {
    return (
        <div className="flex h-screen flex-col overflow-hidden bg-[#c5c7d3] font-['Noto_Sans',sans-serif] text-[11px]">
            <TitleBar />
            <Ribbon />
            <TabStrip />
            <div className="flex min-h-0 flex-1">
                <FeaturePanel />
                <main className="relative flex-1 overflow-hidden">
                    <Scene />
                    <Print3DDialog />
                </main>
            </div>
        </div>
    )
}
